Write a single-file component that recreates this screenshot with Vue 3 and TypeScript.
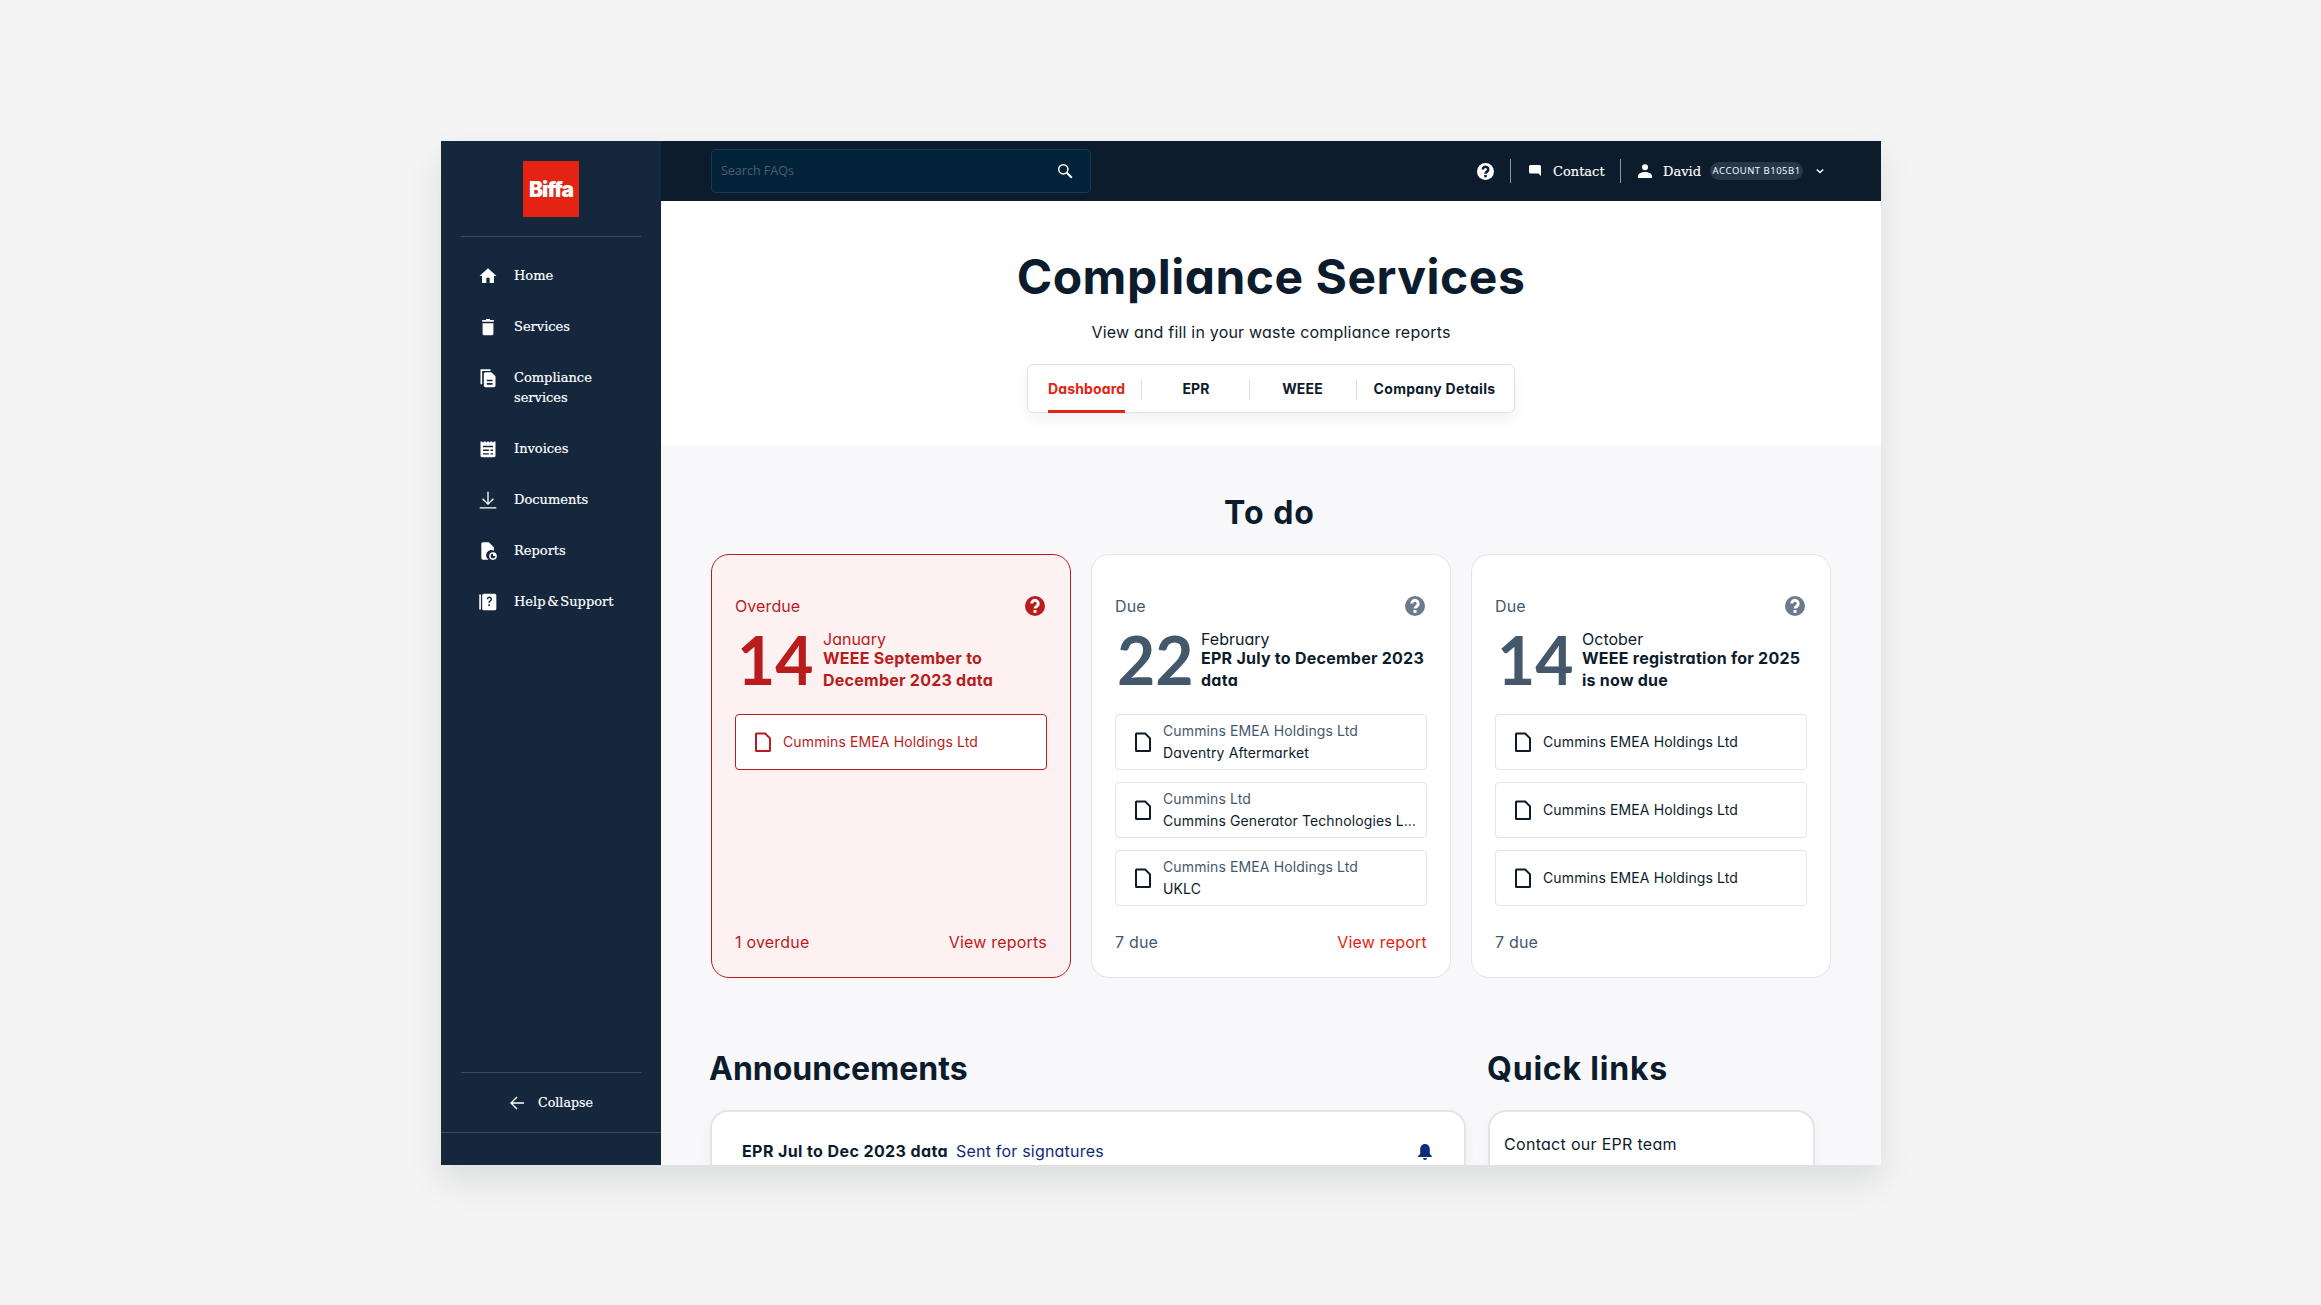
<script setup lang="ts">
interface NavItem { label: string[]; icon: string; stroke?: boolean }
interface Company { top?: string; name: string }
interface Card {
  status: string; num: string; month: string; title: string; companies: Company[];
  due: string; link?: string; overdue?: boolean; numWidth: number
}
const icons: Record<string, string> = {
  home: 'M10 20.5v-6.5h4v6.5h5.2v-8.5h3L12 2.8 1.8 12h3v8.5z',
  bin: 'M5.5 7.5h13V20a2 2 0 0 1-2 2h-9a2 2 0 0 1-2-2zM5 3.6h4.2L10 2.5h4l.8 1.1H19v2H5z',
  copy: 'M3 1.5h12v2H5v16H3zM9 5h7l5 5v11a2 2 0 0 1-2 2H9a2 2 0 0 1-2-2V7a2 2 0 0 1 2-2zm1.5 9v2h7v-2zm0 4v2h7v-2z',
  invoice: 'M3 3h2v1h2V3h2v1h2V3h2v1h2V3h2v1h2V3h2v17a2 2 0 0 1-2 2H5a2 2 0 0 1-2-2zm3 5v2h12V8zm0 4.5v2h7v-2zm9 0v2h3v-2zM6 17v1.5h7V17zm9 0v1.5h3V17z',
  report: 'M6 1.5h7l6 6v4.2a6 6 0 0 0-6.2 10.8H6a2 2 0 0 1-2-2v-17a2 2 0 0 1 2-2zM18 13.5a4.6 4.6 0 1 1 0 9.2 4.6 4.6 0 0 1 0-9.2zm0 1.7a2.9 2.9 0 1 0 2.9 2.9H18z',
  help: 'M1.5 3h2v18h-2zM7 2h13a2 2 0 0 1 2 2v16a2 2 0 0 1-2 2H7a2 2 0 0 1-2-2V4a2 2 0 0 1 2-2zm3.4 6.6h2a1.3 1.3 0 1 1 2 1.2c-1.3.8-1.9 1.5-1.9 3h1.9c0-.8.4-1.1 1.1-1.6a3.2 3.2 0 1 0-5.1-2.6zm2 6v2.2h2v-2.2z'
}
const nav: NavItem[] = [
  { label: ['Home'], icon: icons.home },
  { label: ['Services'], icon: icons.bin },
  { label: ['Compliance', 'services'], icon: icons.copy },
  { label: ['Invoices'], icon: icons.invoice },
  { label: ['Documents'], icon: 'down', stroke: true },
  { label: ['Reports'], icon: icons.report },
  { label: ['Help & Support'], icon: icons.help }
]
const tabs = ['Dashboard', 'EPR', 'WEEE', 'Company Details']
const cards: Card[] = [
  { status: 'Overdue', num: '14', month: 'January', title: 'WEEE September to December 2023 data', overdue: true, numWidth: 88,
    companies: [{ name: 'Cummins EMEA Holdings Ltd' }], due: '1 overdue', link: 'View reports' },
  { status: 'Due', num: '22', month: 'February', title: 'EPR July to December 2023 data', numWidth: 86,
    companies: [
      { top: 'Cummins EMEA Holdings Ltd', name: 'Daventry Aftermarket' },
      { top: 'Cummins Ltd', name: 'Cummins Generator Technologies L…' },
      { top: 'Cummins EMEA Holdings Ltd', name: 'UKLC' }
    ], due: '7 due', link: 'View report' },
  { status: 'Due', num: '14', month: 'October', title: 'WEEE registration for 2025 is now due', numWidth: 87,
    companies: [
      { name: 'Cummins EMEA Holdings Ltd' },
      { name: 'Cummins EMEA Holdings Ltd' },
      { name: 'Cummins EMEA Holdings Ltd' }
    ], due: '7 due' }
]
</script>

<template>
  <div class="page">
    <div class="window">
      <aside class="side">
        <div class="logo-row"><div class="logo">Biffa</div></div>
        <nav class="nav">
          <a v-for="item in nav" :key="item.label[0]" class="nav-item">
            <svg class="nav-icon" viewBox="0 0 24 24">
              <g v-if="item.stroke" fill="none" stroke="#fff" stroke-width="1.6">
                <path d="M12 2v15M5.5 10.5 12 17l6.5-6.5M2 21.5h20" />
              </g>
              <path v-else :d="item.icon" fill="#fff" fill-rule="evenodd" />
            </svg>
            <span class="nav-label"><span v-for="l in item.label" :key="l">{{ l }}</span></span>
          </a>
        </nav>
        <div class="collapse">
          <svg class="back" viewBox="0 0 16 16" fill="none" stroke="#fff" stroke-width="1.4">
            <path d="M15 8H2M8 2 2 8l6 6" />
          </svg>
          <span>Collapse</span>
        </div>
        <div class="side-end"></div>
      </aside>

      <div class="content">
        <header class="top">
          <div class="search">
            <span>Search FAQs</span>
            <svg viewBox="0 0 16 16" fill="none" stroke="#fff">
              <circle cx="6.300" cy="6.300" r="4.600" stroke-width="1.500" />
              <path d="m9.800 9.800 5 5" stroke-width="2" />
            </svg>
          </div>
          <div class="top-right">
            <svg class="q" viewBox="0 0 20 20">
              <circle cx="10" cy="10" r="10" fill="#fff" />
              <path d="M6.800 7.600a3.200 3.200 0 1 1 5 2.600c-1.200.8-1.800 1.200-1.800 2.400" fill="none" stroke="#0c1c2c" stroke-width="3" />
              <rect x="8.500" y="14" width="3" height="2.800" fill="#0c1c2c" />
            </svg>
            <i class="sep first"></i>
            <svg class="chat" viewBox="0 0 12 12"><path d="M1.500 0h9A1.500 1.500 0 0 1 12 1.500V11L9.500 8.600h-8A1.500 1.500 0 0 1 0 7.100V1.500A1.500 1.500 0 0 1 1.500 0z" fill="#fff" /></svg>
            <span class="top-text contact">Contact</span>
            <i class="sep second"></i>
            <svg class="person" viewBox="0 0 14 14">
              <circle cx="7" cy="3.200" r="3" fill="#fff" />
              <path d="M0 14v-1.800C0 9.600 3.500 8 7 8s7 1.600 7 4.200V14z" fill="#fff" />
            </svg>
            <span class="top-text david">David</span>
            <span class="badge">ACCOUNT B105B1</span>
            <svg class="chev" viewBox="0 0 10 6" fill="none" stroke="#fff" stroke-width="1.800"><path d="m1 1 4 4 4-4" /></svg>
          </div>
        </header>

        <section class="hero">
          <h1>Compliance Services</h1>
          <p>View and fill in your waste compliance reports</p>
          <div class="tabs">
            <div v-for="(t, i) in tabs" :key="t" class="tab" :class="'tab' + i">
              <span :class="{ active: i === 0 }">{{ t }}</span>
            </div>
          </div>
        </section>

        <main class="body">
          <h2 class="todo">To do</h2>
          <div class="cards">
            <article v-for="c in cards" :key="c.month" class="card" :class="{ over: c.overdue }">
              <div class="status">
                <span>{{ c.status }}</span>
                <svg viewBox="0 0 20 20">
                  <circle cx="10" cy="10" r="10" class="q-fill" />
                  <path d="M6.800 7.600a3.200 3.200 0 1 1 5 2.600c-1.200.8-1.800 1.200-1.800 2.400" fill="none" stroke="#fff" stroke-width="3" />
                  <rect x="8.500" y="14" width="3" height="2.800" fill="#fff" />
                </svg>
              </div>
              <div class="date">
                <div class="num" :style="{ width: c.numWidth + 'px' }">{{ c.num }}</div>
                <div class="what">
                  <div class="month">{{ c.month }}</div>
                  <div class="title">{{ c.title }}</div>
                </div>
              </div>
              <div class="companies">
                <div v-for="(co, i) in c.companies" :key="i" class="company">
                  <svg viewBox="0 0 16 20" fill="none" stroke-width="2"><path d="M1 1.500h9.200L15 6.300V18.500a.5.5 0 0 1-.5.5h-13a.5.5 0 0 1-.5-.5V2a.5.5 0 0 1 .5-.5z" /></svg>
                  <div class="co-text">
                    <div v-if="co.top" class="co-top">{{ co.top }}</div>
                    <div class="co-name">{{ co.name }}</div>
                  </div>
                </div>
              </div>
              <div class="foot">
                <span>{{ c.due }}</span>
                <a v-if="c.link">{{ c.link }}</a>
              </div>
            </article>
          </div>

          <div class="lower">
            <section>
              <h2>Announcements</h2>
              <div class="panel ann">
                <b>EPR Jul to Dec 2023 data</b>
                <span class="sent">Sent for signatures</span>
                <svg viewBox="0 0 14 16"><path d="M7 0c3 0 4.800 2.300 4.800 5.200V10l2 2v1H.2v-1l2-2V5.200C2.200 2.300 4 0 7 0zM5 14h4a2 2 0 0 1-4 0z" fill="#102a7c" /></svg>
              </div>
            </section>
            <section>
              <h2 class="ql">Quick links</h2>
              <div class="panel links">Contact our EPR team</div>
            </section>
          </div>
        </main>
      </div>
    </div>
  </div>
</template>

<style>
html, body { margin: 0; background: #f4f4f4; }
</style>

<style scoped>
.page {
  width: 2321px; height: 1305px; box-sizing: border-box; padding: 141px 0 0 441px;
  background: #f4f4f4; overflow: hidden;
  font-family: "Inter", "Noto Sans", sans-serif; font-feature-settings: "cv11"; color: #0c1c2c;
}
.window {
  width: 1440px; height: 1024px; display: grid; grid-template-columns: 220px 1220px; grid-template-rows: 1024px; overflow: hidden;
  box-shadow: 0 16px 32px rgba(12, 28, 44, .1); background: #f8f8fa;
}
.side { background: #14273d; display: flex; flex-direction: column; color: #fff; font-family: "DejaVu Serif", serif; -webkit-text-stroke: .2px #fff; min-height: 0; }
.logo-row { margin: 0 20px; padding: 20px 0 19px; border-bottom: 1px solid #3c4c60; display: flex; justify-content: center; }
.logo {
  width: 56px; height: 56px; background: #e52313; color: #fff; display: flex; align-items: center; justify-content: center;
  font: 900 21px/1 "Inter", sans-serif; letter-spacing: -1px; -webkit-text-stroke: 0;
}
.nav { flex: 1; padding-top: 14px; display: flex; flex-direction: column; min-height: 0; }
.nav-item { display: flex; align-items: flex-start; padding: 15px 0 16px 37px; gap: 16px; font-size: 13px; word-spacing: -2.500px; line-height: 20px; }
.nav-icon { width: 20px; height: 20px; flex: none; }
.nav-label { display: flex; flex-direction: column; }
.collapse {
  margin: 0 20px; height: 59px; flex: none; border-top: 1px solid #3c4c60; display: flex; align-items: center; justify-content: center;
  gap: 13px; font-size: 12.600px;
}
.back { width: 16px; height: 16px; }
.side-end { height: 32px; flex: none; border-top: 1px solid #3c4c60; }
.content { display: flex; flex-direction: column; min-width: 0; min-height: 0; overflow: hidden; }
.top { height: 60px; flex: none; background: #0c1c2c; display: flex; align-items: center; justify-content: space-between; padding: 0 0 0 50px; color: #fff; }
.search {
  width: 380px; height: 44px; box-sizing: border-box; background: #03233a; border: 1px solid #183b53; border-radius: 5px;
  display: flex; align-items: center; justify-content: space-between; padding: 0 17px 2px 9px;
  font: 12.500px "Open Sans", sans-serif; color: #4c5e6e;
}
.search svg { width: 16px; height: 16px; margin-top: 2px; }
.top-right { display: flex; align-items: center; font-family: "DejaVu Serif", serif; font-size: 13px; padding-right: 57px; -webkit-text-stroke: .15px #fff; }
.q { width: 17px; height: 17px; }
.sep { width: 1px; height: 24px; background: #8b96a2; }
.sep.first { margin: 0 18px 0 16px; }
.sep.second { margin: 0 17px 0 16px; }
.chat { width: 12px; height: 12px; margin-right: 12px; }
.contact { width: 51px; }
.person { width: 14px; height: 14px; margin-right: 11px; }
.david { width: 38px; margin-right: 9px; }
.badge {
  width: 93px; height: 18px; border-radius: 9px; background: #24384a; text-align: center; -webkit-text-stroke: 0;
  font: 500 9.500px/18px "Open Sans", sans-serif; letter-spacing: .5px; margin-right: 13px;
}
.chev { width: 8px; height: 6px; }
.hero { height: 245px; flex: none; box-sizing: border-box; background: #fff; padding-top: 48px; display: flex; flex-direction: column; align-items: center; }
.hero h1 { margin: 0; font-size: 48px; line-height: 56px; font-weight: 700; letter-spacing: .5px; }
.hero p { margin: 15px 0 20px; font-size: 16px; line-height: 24px; letter-spacing: .2px; }
.tabs {
  display: flex; height: 49px; box-sizing: border-box; width: 488px; background: #fff; border: 1px solid #e0e2e6; border-radius: 6px;
  box-shadow: 0 6px 14px rgba(12, 28, 44, .06); font-size: 14px; font-weight: 700; letter-spacing: .15px;
}
.tab { position: relative; display: flex; justify-content: center; }
.tab span { display: flex; align-items: center; height: 48px; box-sizing: border-box; padding-bottom: 1px; }
.tab span.active { color: #e52313; height: 48px; border-bottom: 3px solid #e52313; padding: 2px 0 0; }
.tab:not(:last-child)::after { content: ""; position: absolute; right: 0; top: 15px; height: 20px; width: 1px; background: #dfe1e4; }
.tab0 { width: 114px; justify-content: flex-start; padding-left: 20px; box-sizing: border-box; }
.tab1 { width: 108px; }
.tab2 { width: 107px; padding-right: 2px; box-sizing: border-box; }
.tab3 { width: 157px; letter-spacing: .3px; padding-right: 2px; box-sizing: border-box; }
.body { flex: 1; padding: 47px 50px 0; min-height: 0; }
.todo { margin: 0 0 21px; padding-right: 3px; text-align: center; font-size: 32px; line-height: 40px; font-weight: 700; letter-spacing: 1px; }
.cards { display: grid; grid-template-columns: repeat(3, 360px); gap: 20px; }
.card {
  height: 424px; box-sizing: border-box; background: #fff; border: 1px solid #e2e4e8; border-radius: 18px;
  padding: 39px 23px 24px; display: flex; flex-direction: column; color: #0c1c2c;
}
.status { height: 24px; display: flex; justify-content: space-between; align-items: center; font-size: 16px; letter-spacing: .1px; color: #44586c; padding-right: 2px; }
.status svg { width: 20px; height: 20px; }
.q-fill { fill: #6b7a8c; }
.date { display: flex; height: 74px; margin-top: 10px; }
.num { flex: none; font: 700 66px/64px "Lato", sans-serif; color: #44586c; padding-left: 2px; box-sizing: border-box; }
.month { font-size: 16px; line-height: 22px; }
.what { margin-top: 0; }
.title { font-size: 16px; line-height: 22px; font-weight: 700; letter-spacing: .25px; margin-top: -3px; }
.companies { margin-top: 12px; display: flex; flex-direction: column; gap: 12px; }
.company { height: 56px; box-sizing: border-box; background: #fff; border: 1px solid #e2e4e8; border-radius: 4px; display: flex; align-items: center; padding: 0 12px 0 19px; gap: 12px; }
.company svg { width: 16px; height: 20px; flex: none; stroke: #0c1c2c; }
.co-text { font-size: 14px; letter-spacing: .12px; line-height: 22px; min-width: 0; flex: 1; }
.co-top { color: #44586c; }
.co-name { white-space: nowrap; }
.foot { margin-top: auto; display: flex; justify-content: space-between; font-size: 16px; letter-spacing: .2px; line-height: 22px; color: #44586c; }
.foot a { color: #e52313; }
.card.over { background: #fef1f1; border-color: #bc1c1c; color: #b91c1c; }
.card.over .status, .card.over .num, .card.over .foot, .card.over .foot a, .card.over .co-name { color: #b91c1c; }
.card.over .q-fill { fill: #b91c1c; }
.card.over .company { border-color: #bc1c1c; }
.card.over .company svg { stroke: #b91c1c; }
.lower { display: grid; grid-template-columns: 756px 327px; gap: 22px; margin-top: 71px; margin-left: -1px; }
.lower h2 { margin: 0 0 21px -1px; font-size: 32px; line-height: 40px; font-weight: 700; }
.lower h2.ql { letter-spacing: .8px; }
.panel { height: 120px; box-sizing: border-box; background: #fff; border: 2px solid #e1e5e9; border-radius: 18px; box-shadow: 0 6px 14px rgba(12, 28, 44, .04); }
.ann { display: flex; align-items: flex-start; padding: 28px 32px 0 30px; font-size: 16px; line-height: 22px; }
.ann b { font-weight: 700; letter-spacing: .4px; }
.sent { margin-left: 8px; color: #102a7c; flex: 1; letter-spacing: .2px; }
.ann svg { width: 14px; height: 16px; margin-top: 4px; }
.links { padding: 21px 14px; font-size: 16px; letter-spacing: .3px; line-height: 22px; }
</style>
